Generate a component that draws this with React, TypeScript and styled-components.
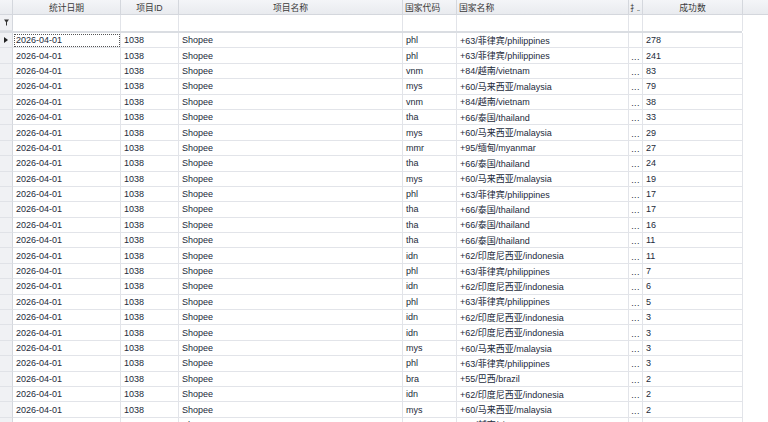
import styled, { createGlobalStyle } from "styled-components";

const GlobalStyle = createGlobalStyle`
    html, body {
        margin: 0;
        padding: 0;
        background: #ffffff;
        overflow: hidden;
    }
    * { box-sizing: border-box; }
`

const COLS = "13px 108px 58px 224px 54px 172px 14px 100px 1fr"
const ROW_H = 15.4

const Grid = styled.div`
    width: 768px;
    height: 422px;
    overflow: hidden;
    font-family: "Liberation Sans", "Noto Sans CJK SC", sans-serif;
    font-size: 9px;
    color: #232a3a;
`
const HeadRow = styled.div`
    display: grid;
    grid-template-columns: ${COLS};
    height: 15px;
    background: linear-gradient(#f4f5f8, #e9ebef);
    border-bottom: 1px solid #d4d7dd;
`
const HeadCell = styled.div<{ $align?: string }>`
    display: flex;
    align-items: center;
    justify-content: ${p => p.$align || "center"};
    padding: 0 2px;
    border-right: 1px solid #d4d7dd;
    color: #3a3a3a;
    font-size: 8.8px;
    white-space: nowrap;
    overflow: hidden;
    &:last-child { border-right: none; }
`
const NarrowHead = styled(HeadCell)`
    padding: 0 0 0 1px;
    font-size: 7.6px;
    letter-spacing: -0.8px;
    justify-content: flex-start;
    overflow: visible;
`
const FilterRow = styled.div`
    display: grid;
    grid-template-columns: ${COLS};
    height: 16px;
    background: #ffffff;
`
const FilterCell = styled.div`
    border-right: 1px solid #e2e4e9;
    &:last-child { border-right: none; }
`
const Indicator = styled.div`
    display: flex;
    align-items: center;
    justify-content: center;
    background: #f0f1f4;
    border-right: 1px solid #d4d7dd;
    border-bottom: 1px solid #e0e2e7;
`
const Separator = styled.div`
    width: 742px;
    height: 2px;
    background: #dadde2;
`
const Row = styled.div`
    display: grid;
    grid-template-columns: ${COLS};
    height: ${ROW_H}px;
`
const Cell = styled.div<{ $focus?: boolean }>`
    display: flex;
    align-items: center;
    padding: 0 3px;
    border-right: 1px solid #e2e4e9;
    border-bottom: 1px solid #e2e4e9;
    white-space: nowrap;
    overflow: hidden;
    ${p => p.$focus ? `outline: 1px dotted #555; outline-offset: -2px;` : ""}
`
const Ellipsis = styled(Cell)`
    padding: 2px 0 0 0;
    justify-content: center;
    letter-spacing: 0.3px;
`
const Blank = styled.div``

const FilterIcon = () => (
    <svg width="5" height="7" viewBox="0 0 5 7">
        <path d="M0 0.5 H5 L3 3.2 V6.5 H2 V3.2 Z" fill="#333" />
    </svg>
)
const Arrow = () => (
    <svg width="4" height="6" viewBox="0 0 4 6">
        <path d="M0 0 L4 3 L0 6 Z" fill="#222" />
    </svg>
)

const COUNTRY: Record<string, string> = {
    phl: "+63/菲律宾/philippines",
    vnm: "+84/越南/vietnam",
    mys: "+60/马来西亚/malaysia",
    tha: "+66/泰国/thailand",
    mmr: "+95/缅甸/myanmar",
    idn: "+62/印度尼西亚/indonesia",
    bra: "+55/巴西/brazil",
}

const data: [string, number][] = [
    ["phl", 278], ["phl", 241], ["vnm", 83], ["mys", 79], ["vnm", 38],
    ["tha", 33], ["mys", 29], ["mmr", 27], ["tha", 24], ["mys", 19],
    ["phl", 17], ["tha", 17], ["tha", 16], ["tha", 11], ["idn", 11],
    ["phl", 7], ["idn", 6], ["phl", 5], ["idn", 3], ["idn", 3],
    ["mys", 3], ["phl", 3], ["bra", 2], ["idn", 2], ["mys", 2],
    ["vnm", 2],
]

export default function App() {
    return (
        <>
            <GlobalStyle />
            <Grid>
                <HeadRow>
                    <HeadCell />
                    <HeadCell>统计日期</HeadCell>
                    <HeadCell>项目ID</HeadCell>
                    <HeadCell>项目名称</HeadCell>
                    <HeadCell $align="flex-start">国家代码</HeadCell>
                    <HeadCell $align="flex-start">国家名称</HeadCell>
                    <NarrowHead>扌..</NarrowHead>
                    <HeadCell>成功数</HeadCell>
                    <HeadCell />
                </HeadRow>
                <FilterRow>
                    <Indicator><FilterIcon /></Indicator>
                    <FilterCell />
                    <FilterCell />
                    <FilterCell />
                    <FilterCell />
                    <FilterCell />
                    <FilterCell />
                    <FilterCell />
                    <Blank />
                </FilterRow>
                <Separator />
                {data.map(([code, n], i) => (
                    <Row key={i}>
                        <Indicator>{i === 0 ? <Arrow /> : null}</Indicator>
                        <Cell $focus={i === 0}>2026-04-01</Cell>
                        <Cell>1038</Cell>
                        <Cell>Shopee</Cell>
                        <Cell>{code}</Cell>
                        <Cell>{COUNTRY[code]}</Cell>
                        <Ellipsis>{i === 0 ? "" : "..."}</Ellipsis>
                        <Cell>{n}</Cell>
                        <Blank />
                    </Row>
                ))}
            </Grid>
        </>
    )
}
